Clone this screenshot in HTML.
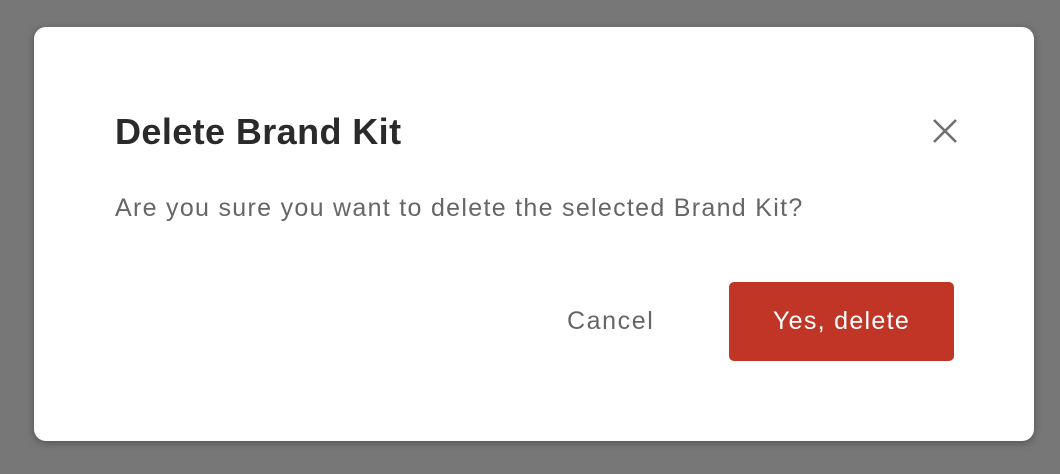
<!DOCTYPE html>
<html><head><style>
body{margin:0;width:1060px;height:474px;background:#777;font-family:"Liberation Sans",sans-serif;position:relative;overflow:hidden}
.d{position:absolute;left:34px;top:27px;width:1000px;height:414px;background:#fff;border-radius:12px;box-shadow:0 2px 8px rgba(0,0,0,.3)}
.t{position:absolute;left:81px;top:84px;font-size:36px;font-weight:bold;color:#2a2a2a;letter-spacing:0.4px}
.p{position:absolute;left:81px;top:167px;font-size:25px;color:#666;letter-spacing:1.3px}
.c{position:absolute;left:533px;top:280px;font-size:25px;color:#666;letter-spacing:1.6px}
.b{position:absolute;left:695px;top:255px;width:225px;height:79px;background:#c03525;border-radius:5px;color:#fff;font-size:25px;text-align:center;line-height:79px;letter-spacing:1.3px}
</style></head><body>
<div class="d">
<div class="t">Delete Brand Kit</div>
<svg style="position:absolute;left:898px;top:91px" width="26" height="26" viewBox="0 0 26 26"><path d="M2 2L24 24M24 2L2 24" stroke="#707070" stroke-width="2.6"/></svg>
<div class="p">Are you sure you want to delete the selected Brand Kit?</div>
<div class="c">Cancel</div>
<div class="b">Yes, delete</div>
</div>
</body></html>
